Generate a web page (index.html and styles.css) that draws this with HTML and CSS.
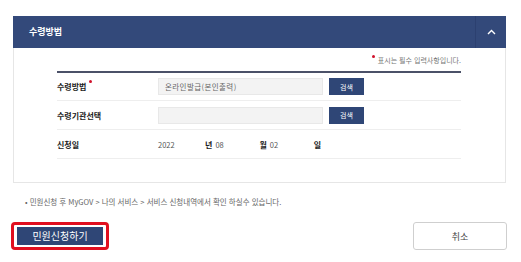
FILE: index.html
```html
<!DOCTYPE html>
<html lang="ko">
<head>
    <meta charset="utf-8">
    <title>수령방법</title>
    <link rel="stylesheet" href="styles.css">
</head>
<body>
    <div class="wrap">
        <div class="panel">
            <div class="panel-head">
                <h2>수령방법</h2>
                <button type="button" class="toggle">
                    <svg width="9" height="6" viewBox="0 0 9 6"><path d="M1 5 L4.5 1.5 L8 5" fill="none" stroke="#fff" stroke-width="1.4"/></svg>
                </button>
            </div>
            <div class="panel-body">
                <p class="req-note"><span class="req"></span>표시는 필수 입력사항입니다.</p>
                <div class="form-table">
                    <div class="form-row">
                        <label class="label">수령방법<span class="req"></span></label>
                        <div class="field">
                            <input type="text" class="input" value="온라인발급(본인출력)" readonly>
                            <button type="button" class="btn-search">검색</button>
                        </div>
                    </div>
                    <div class="form-row">
                        <label class="label">수령기관선택</label>
                        <div class="field">
                            <input type="text" class="input" readonly>
                            <button type="button" class="btn-search">검색</button>
                        </div>
                    </div>
                    <div class="form-row">
                        <label class="label">신청일</label>
                        <div class="field date">
                            <span class="num year">2022</span>
                            <b>년</b><span class="num">08</span>
                            <b>월</b><span class="num">02</span>
                            <b>일</b>
                        </div>
                    </div>
                </div>
            </div>
        </div>

        <p class="guide">• 민원신청 후 MyGOV &gt; 나의 서비스 &gt; 서비스 신청내역에서 확인 하실수 있습니다.</p>

        <div class="actions">
            <div class="highlight">
                <button type="button" class="btn-submit">민원신청하기</button>
            </div>
            <button type="button" class="btn-cancel">취소</button>
        </div>
    </div>
</body>
</html>
```

FILE: styles.css
```css
body {
    margin: 0;
    font-family: "Noto Sans CJK KR", "Noto Sans", sans-serif;
    color: #333;
    background: #fff;
}

.wrap {
    width: 493px;
    margin: 16px 0 0 13px;
}

.panel-head {
    display: flex;
    align-items: stretch;
    height: 32px;
    background: #33497a;
}

.panel-head h2 {
    flex: 1;
    margin: 0;
    padding-left: 16px;
    font-size: 9px;
    font-weight: bold;
    line-height: 32px;
    color: #fff;
}

.toggle {
    width: 31px;
    padding: 0;
    border: 0;
    border-left: 1px solid #2c4070;
    background: transparent;
    display: flex;
    align-items: center;
    justify-content: center;
}

.panel-body {
    border: 1px solid #e6e6e6;
    border-top: 0;
    padding: 0 44px 23px 43px;
}

.req-note {
    margin: 0;
    height: 23px;
    padding-top: 1px;
    box-sizing: border-box;
    display: flex;
    align-items: center;
    justify-content: flex-end;
    font-size: 7px;
    color: #777;
}

.req {
    display: inline-block;
    width: 3px;
    height: 3px;
    border-radius: 50%;
    background: #d0112b;
    margin-right: 3px;
    position: relative;
    top: -4px;
}

.label .req {
    margin: 0 0 0 3px;
    top: -7px;
}

.form-table {
    border-top: 2px solid #4b5168;
}

.form-row {
    display: flex;
    align-items: center;
    height: 29px;
    border-bottom: 1px solid #eeeeee;
    box-sizing: border-box;
}

.form-row:first-child {
    height: 28px;
}

.label {
    width: 101px;
    font-size: 8px;
    font-weight: bold;
    color: #222;
}

.field {
    display: flex;
    align-items: center;
}

.input {
    width: 165px;
    height: 17px;
    box-sizing: border-box;
    padding: 0 6px;
    border: 1px solid #e8e8e8;
    background: #f3f3f3;
    font-family: inherit;
    font-size: 7.5px;
    letter-spacing: 0.4px;
    color: #666;
    outline: none;
}

.btn-search {
    margin-left: 6px;
    width: 35px;
    height: 17px;
    padding: 0;
    border: 0;
    background: #2f4676;
    color: #fff;
    font-family: inherit;
    font-size: 7px;
}

.date {
    font-size: 7.5px;
    color: #555;
}

.date b {
    font-size: 8px;
    color: #222;
    margin-right: 3px;
}

.date .num {
    width: 44px;
}

.date .year {
    width: 47px;
}

.guide {
    margin: 14px 0 0 12px;
    font-size: 7.5px;
    line-height: 10px;
    color: #666;
}

.actions {
    display: flex;
    justify-content: space-between;
    align-items: center;
    margin-top: 15px;
}

.highlight {
    margin-left: -2px;
    padding: 2px 3px;
    border: 3px solid #e10f1f;
    border-radius: 4px;
    background: #fff;
}

.btn-submit {
    display: block;
    width: 86px;
    height: 18px;
    padding: 0;
    border: 0;
    background: #2f4676;
    color: #fff;
    font-family: inherit;
    font-size: 10px;
    line-height: 18px;
}

.btn-cancel {
    width: 94px;
    height: 28px;
    margin-right: -1px;
    border: 1px solid #cfcfcf;
    border-radius: 3px;
    background: #fff;
    color: #444;
    font-family: inherit;
    font-size: 9px;
}
```
